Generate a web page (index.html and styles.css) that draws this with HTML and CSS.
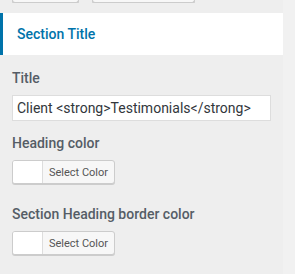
FILE: index.html
```html
<!DOCTYPE html>
<html lang="en">
<head>
  <meta charset="UTF-8" />
  <title>Section Title</title>
  <link rel="stylesheet" href="styles.css">
</head>
<body>

  <div class="sidebar">
    <div class="top-actions">
      <span class="top-btn top-btn-back"></span>
      <span class="top-btn top-btn-wide"></span>
    </div>

    <div class="section-head">
      <h3>Section Title</h3>
    </div>

    <div class="controls">
      <div class="control">
        <label class="control-label" for="title">Title</label>
        <input class="text-input" id="title" type="text" value="Client <strong>Testimonials</strong>" />
      </div>

      <div class="control">
        <span class="control-label">Heading color</span>
        <button class="color-btn">
          <span class="swatch"></span>
          <span class="color-text">Select Color</span>
        </button>
      </div>

      <div class="control control-spaced">
        <span class="control-label">Section Heading border color</span>
        <button class="color-btn">
          <span class="swatch"></span>
          <span class="color-text">Select Color</span>
        </button>
      </div>
    </div>
  </div>

  <div class="scroll-strip"></div>

</body>
</html>
```

FILE: styles.css
```css
* {
  box-sizing: border-box;
}

body {
  margin: 0;
  padding: 0;
  height: 274px;
  display: flex;
  background: #eeeeee;
  font-family: Roboto, "Noto Sans", sans-serif;
  overflow: hidden;
}

.sidebar {
  width: 283px;
  background: #eeeeee;
}

.scroll-strip {
  flex: 1;
  background: #f1f1f1;
}

.top-actions {
  height: 3px;
  display: flex;
  align-items: flex-end;
  gap: 13px;
  padding-left: 12px;
  overflow: hidden;
}

.top-btn {
  display: block;
  height: 28px;
  flex: none;
  border: 1px solid #cccccc;
  border-top: none;
  border-radius: 0 0 3px 3px;
  background: #f7f7f7;
  box-shadow: 0 1px 0 #cccccc;
}

.top-btn-back {
  width: 67px;
}

.top-btn-wide {
  width: 103px;
}

.section-head {
  margin-top: 10px;
  height: 42px;
  background: #ffffff;
  border-left: 3px solid #0073aa;
  display: flex;
  align-items: center;
  padding-left: 14px;
}

.section-head h3 {
  margin: 0;
  font-size: 14px;
  font-weight: 500;
  color: #0073aa;
}

.controls {
  padding: 15px 12px 0 12px;
}

.control {
  margin-bottom: 14px;
}

.control-spaced {
  margin-top: 22px;
}

.control-label {
  display: block;
  font-size: 14px;
  font-weight: 500;
  color: #555d66;
  margin-bottom: 9px;
}

.text-input {
  display: block;
  width: 259px;
  height: 26px;
  border: 1px solid #dddddd;
  background: #ffffff;
  padding: 0 4px;
  font-family: Roboto, "Noto Sans", sans-serif;
  font-size: 14px;
  color: #32373c;
  outline: none;
}

.color-btn {
  display: flex;
  align-items: stretch;
  width: 103px;
  height: 24px;
  padding: 0;
  border: 1px solid #cccccc;
  border-radius: 3px;
  background: #f7f7f7;
  box-shadow: 0 1px 0 #cccccc;
  overflow: hidden;
  cursor: pointer;
}

.swatch {
  width: 30px;
  background: #ffffff;
  border-right: 1px solid #dddddd;
}

.color-text {
  flex: 1;
  display: flex;
  align-items: center;
  justify-content: center;
  font-family: Roboto, "Noto Sans", sans-serif;
  font-size: 11px;
  color: #555555;
}
```
